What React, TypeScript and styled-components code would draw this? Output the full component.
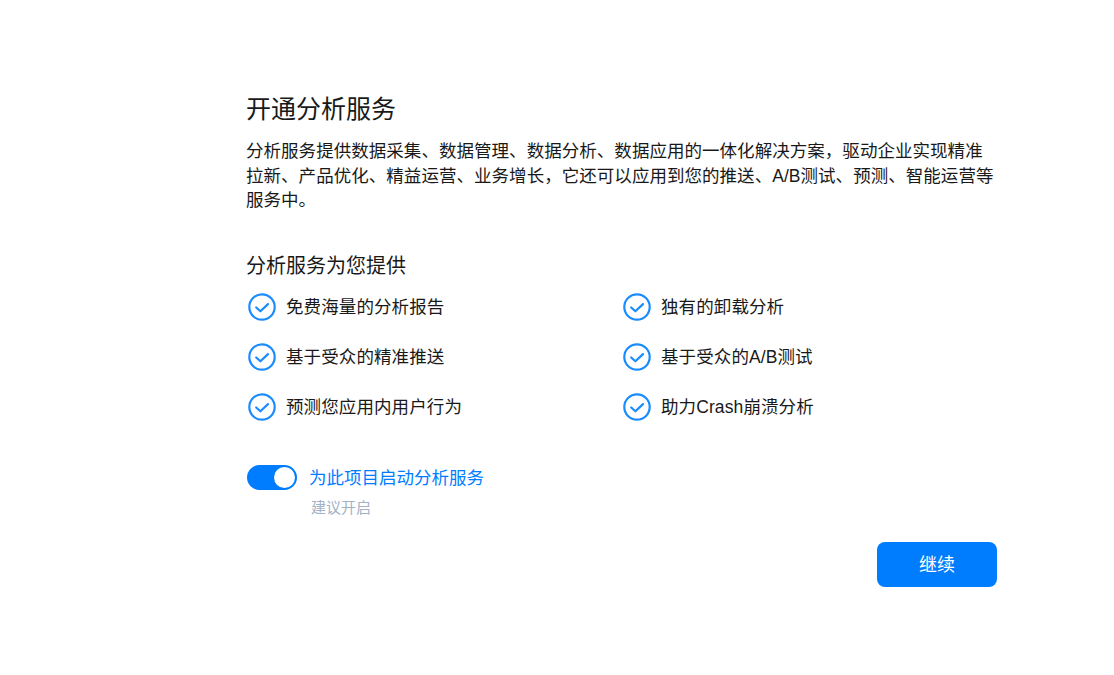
import React from "react";
import styled, { createGlobalStyle } from "styled-components";

const Global = createGlobalStyle`
  html, body { margin: 0; padding: 0; background: #fff; }
  body { font-family: "Liberation Sans", "Noto Sans CJK SC", sans-serif; }
`;
const Page = styled.div`
  width: 1114px; height: 675px; box-sizing: border-box; padding: 91px 117px 0 247px; overflow: hidden;
`;
const Title = styled.h1`
  margin: 0 0 0 -1px; font-size: 25px; line-height: 36px; font-weight: 400; color: #191919;
`;
const Desc = styled.p`
  margin: 12.3px 0 0 -1px; font-size: 17.5px; line-height: 24.5px; letter-spacing: 0.04px; color: #191919;
`;
const SubTitle = styled.h2`
  margin: 38.2px 0 0 -1px; font-size: 20px; line-height: 30px; font-weight: 400; color: #191919;
`;
const Grid = styled.div`
  display: grid; grid-template-columns: 375px 1fr; grid-auto-rows: 50px; margin-top: 11px;
`;
const Item = styled.div`
  display: flex; align-items: center; gap: 9px; height: 30px;
`;
const ItemText = styled.span`
  font-size: 17.5px; line-height: 24px; letter-spacing: 0.1px; color: #191919;
`;
const ToggleRow = styled.div`
  display: flex; align-items: center; gap: 12px; height: 27px; margin-top: 22px;
`;
const Track = styled.div`
  width: 50px; height: 25px; border-radius: 13px; background: #007dff; display: flex; align-items: center; justify-content: flex-end; padding-right: 2px; box-sizing: border-box;
`;
const Knob = styled.div`
  width: 21px; height: 21px; border-radius: 50%; background: #fff;
`;
const ToggleLabel = styled.span`
  font-size: 17.5px; color: #007dff; line-height: 25px; padding-top: 2px;
`;
const Hint = styled.div`
  margin: 6px 0 0 64px; font-size: 15px; line-height: 21px; color: #a3b1c6;
`;
const Footer = styled.div`
  display: flex; justify-content: flex-end; margin-top: 24px;
`;
const Button = styled.button`
  width: 120px; height: 45px; border: 0; padding: 0 0 2px; border-radius: 8px; background: #007dff; color: #fff; font-family: inherit; font-size: 18px;
`;

const Check = () => (
  <svg width="30" height="30" viewBox="0 0 30 30" fill="none" stroke="#1a8cff" strokeWidth="2.2">
    <circle cx="15" cy="15" r="12.7" />
    <path d="M9.2 15.5l4.2 3.8 7.6-7.2" strokeLinecap="round" strokeLinejoin="round" />
  </svg>
);

const items = ["免费海量的分析报告", "独有的卸载分析", "基于受众的精准推送", "基于受众的A/B测试", "预测您应用内用户行为", "助力Crash崩溃分析"];

export default function App() {
  return (
    <Page>
      <Global />
      <Title>开通分析服务</Title>
      <Desc>分析服务提供数据采集、数据管理、数据分析、数据应用的一体化解决方案，驱动企业实现精准拉新、产品优化、精益运营、业务增长，它还可以应用到您的推送、A/B测试、预测、智能运营等服务中。</Desc>
      <SubTitle>分析服务为您提供</SubTitle>
      <Grid>
        {items.map((t) => (
          <Item key={t}><Check /><ItemText>{t}</ItemText></Item>
        ))}
      </Grid>
      <ToggleRow>
        <Track><Knob /></Track>
        <ToggleLabel>为此项目启动分析服务</ToggleLabel>
      </ToggleRow>
      <Hint>建议开启</Hint>
      <Footer><Button>继续</Button></Footer>
    </Page>
  );
}
